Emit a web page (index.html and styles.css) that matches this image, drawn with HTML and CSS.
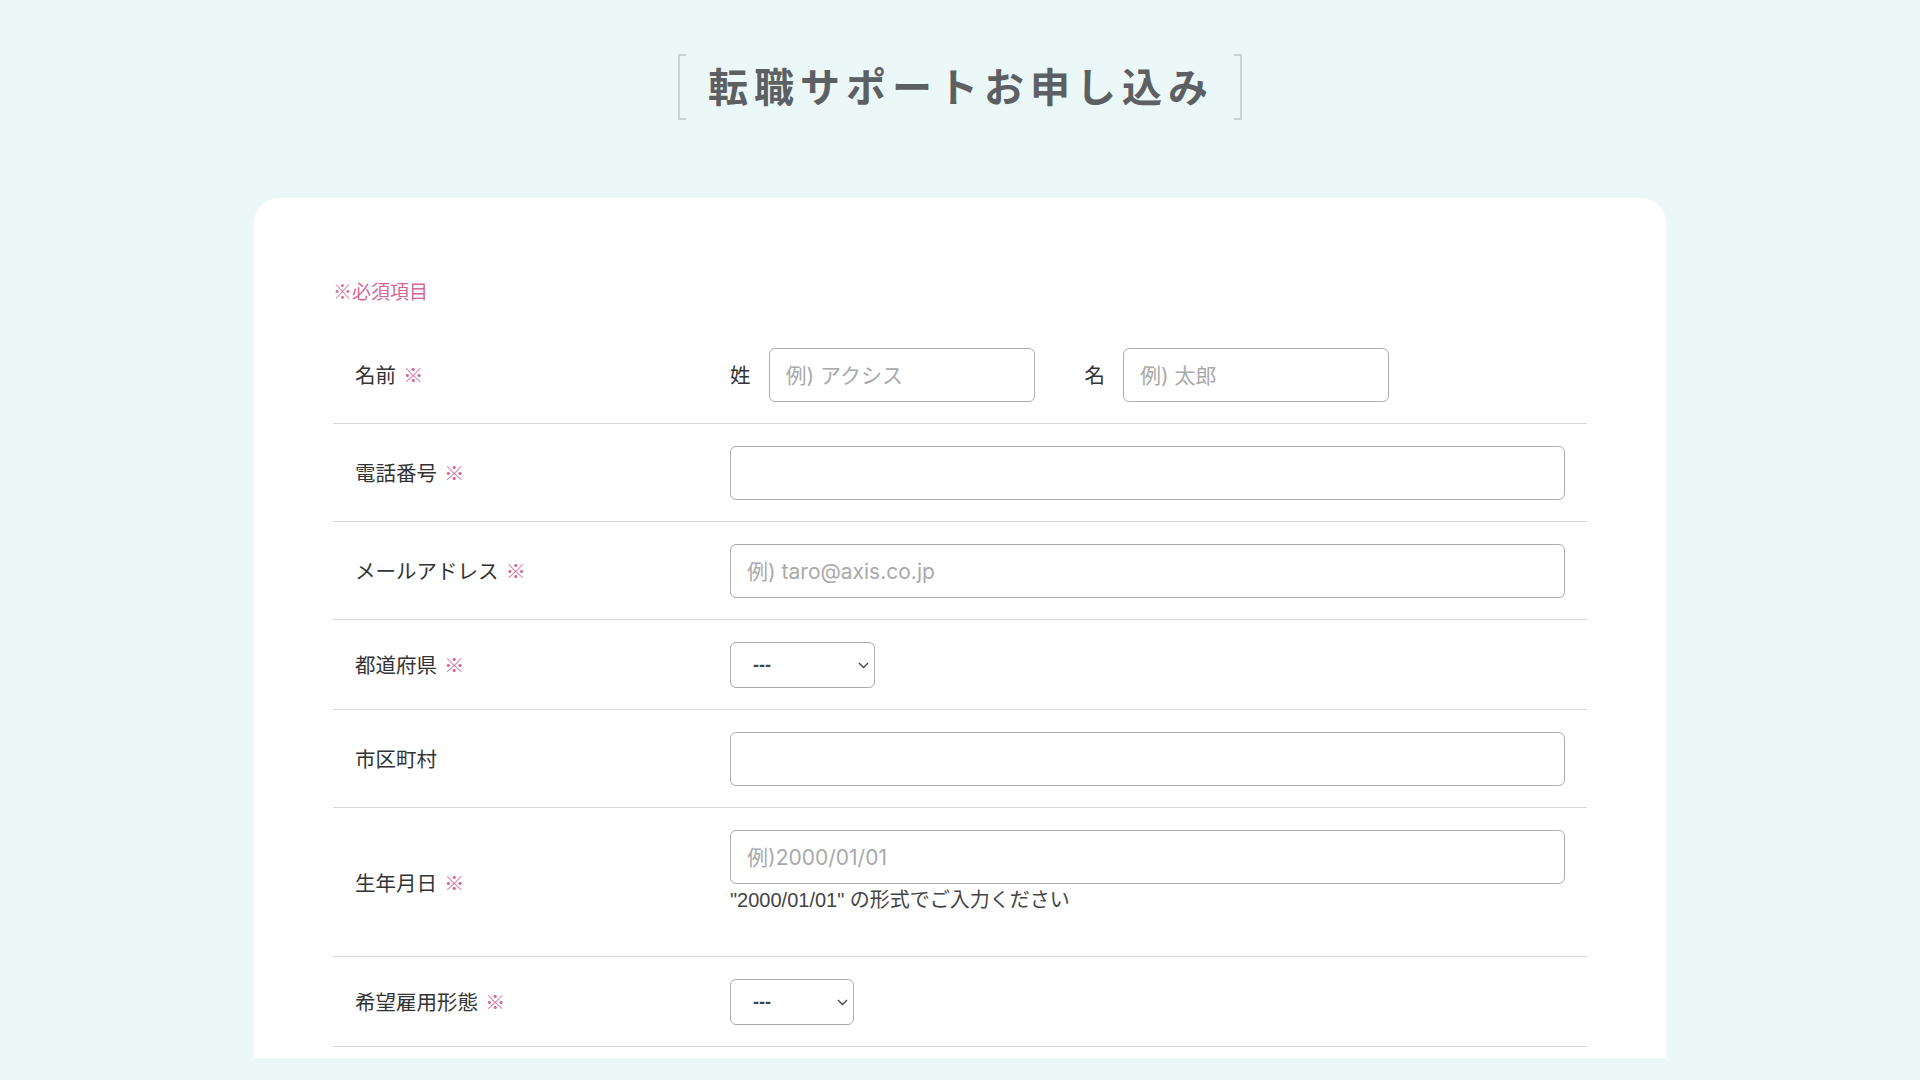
FILE: index.html
```html
<!DOCTYPE html>
<html lang="ja">
<head>
<meta charset="utf-8">
<title>転職サポートお申し込み</title>
<link rel="stylesheet" href="styles.css">
</head>
<body>
<div class="page">
  <h1 class="title">
    <span class="bracket bracket-left"></span>
    <span class="title-text">転職サポートお申し込み</span>
    <span class="bracket bracket-right"></span>
  </h1>

  <main class="card">
    <p class="note">※必須項目</p>

    <div class="row">
      <div class="label">名前<span class="req">※</span></div>
      <div class="field name-field">
        <label class="name-part"><span class="part-label">姓</span><input class="input input-name" type="text" placeholder="例) アクシス"></label>
        <label class="name-part"><span class="part-label">名</span><input class="input input-name" type="text" placeholder="例) 太郎"></label>
      </div>
    </div>

    <div class="row">
      <div class="label">電話番号<span class="req">※</span></div>
      <div class="field"><input class="input" type="text"></div>
    </div>

    <div class="row">
      <div class="label">メールアドレス<span class="req">※</span></div>
      <div class="field"><input class="input" type="text" placeholder="例) taro@axis.co.jp"></div>
    </div>

    <div class="row">
      <div class="label">都道府県<span class="req">※</span></div>
      <div class="field">
        <div class="select-wrap select-pref">
          <select class="select"><option>---</option></select>
          <svg class="chev" width="11" height="7" viewBox="0 0 11 7"><path d="M1 1l4.5 4.5L10 1" fill="none" stroke="#444" stroke-width="1.4"/></svg>
        </div>
      </div>
    </div>

    <div class="row">
      <div class="label">市区町村</div>
      <div class="field"><input class="input" type="text"></div>
    </div>

    <div class="row">
      <div class="label">生年月日<span class="req">※</span></div>
      <div class="field field-col">
        <input class="input" type="text" placeholder="例)2000/01/01">
        <p class="hint">"2000/01/01" の形式でご入力ください</p>
      </div>
    </div>

    <div class="row">
      <div class="label">希望雇用形態<span class="req">※</span></div>
      <div class="field">
        <div class="select-wrap select-emp">
          <select class="select"><option>---</option></select>
          <svg class="chev" width="11" height="7" viewBox="0 0 11 7"><path d="M1 1l4.5 4.5L10 1" fill="none" stroke="#444" stroke-width="1.4"/></svg>
        </div>
      </div>
    </div>
  </main>
</div>
</body>
</html>
```

FILE: styles.css
```css
* { box-sizing: border-box; }

html, body {
  margin: 0;
  padding: 0;
}

body {
  background: #ecf8f8;
  font-family: "Liberation Sans", "Noto Sans CJK JP", sans-serif;
  color: #333;
  height: 1080px;
  overflow: hidden;
}

.page {
  padding-top: 54px;
}

.title {
  display: flex;
  justify-content: center;
  margin: 0;
  font-weight: 700;
}

.bracket {
  width: 8px;
  height: 66px;
  border: 2px solid #c9d2d5;
}

.bracket-left { border-right: none; }
.bracket-right { border-left: none; }

.title-text {
  font-family: "Noto Sans CJK JP", sans-serif;
  font-size: 40px;
  line-height: 62px;
  height: 66px;
  letter-spacing: 6px;
  color: #5c6062;
  padding: 0 20px 4px 22px;
}

.card {
  width: 1412px;
  margin: 78px auto 0;
  background: #fff;
  border-radius: 25px 25px 0 0;
  padding: 79px 79px 11px 79px;
}

.note {
  margin: 0 0 22px;
  font-family: "Noto Sans CJK JP", sans-serif;
  font-size: 19px;
  line-height: 27px;
  color: #d4679a;
}

.row {
  display: grid;
  grid-template-columns: 375px 1fr;
  align-items: center;
  padding: 22px 22px 21px;
  border-bottom: 1px solid #d8d8d8;
}

.label {
  font-family: "Noto Sans CJK JP", sans-serif;
  font-size: 20.5px;
  line-height: 30px;
  padding-bottom: 2px;
  color: #333;
}

.req {
  color: #d4679a;
  margin-left: 7px;
}

.field {
  display: flex;
  align-items: center;
}

.field-col {
  flex-direction: column;
  align-items: stretch;
}

.name-field {
  gap: 50px;
}

.name-part {
  display: flex;
  align-items: center;
  gap: 18px;
}

.part-label {
  font-family: "Noto Sans CJK JP", sans-serif;
  font-size: 20.5px;
  color: #333;
  padding-bottom: 2px;
}

.input {
  width: 100%;
  height: 54px;
  border: 1px solid #acacac;
  border-radius: 6px;
  padding: 0 16px;
  font-family: Inter, "Noto Sans CJK JP", sans-serif;
  font-size: 21px;
  color: #333;
  background: #fff;
  outline: none;
}

.input::placeholder {
  color: #a9a9a9;
}

.input-name {
  width: 266px;
}

.hint {
  margin: 1px 0 20px;
  font-family: "Liberation Sans", "Noto Sans CJK JP", sans-serif;
  font-size: 20px;
  line-height: 30px;
  color: #444;
}

.select-wrap {
  position: relative;
  display: inline-block;
}

.select-pref { width: 145px; }
.select-emp { width: 124px; }

.select {
  -webkit-appearance: none;
  appearance: none;
  width: 100%;
  height: 46px;
  border: 1px solid #acacac;
  border-radius: 6px;
  background: #fff;
  padding: 0 0 0 22px;
  font-family: "Liberation Sans", sans-serif;
  font-size: 18px;
  font-weight: 700;
  color: #444;
  outline: none;
}

.chev {
  position: absolute;
  right: 6px;
  top: 50%;
  margin-top: -3px;
  pointer-events: none;
}
```
